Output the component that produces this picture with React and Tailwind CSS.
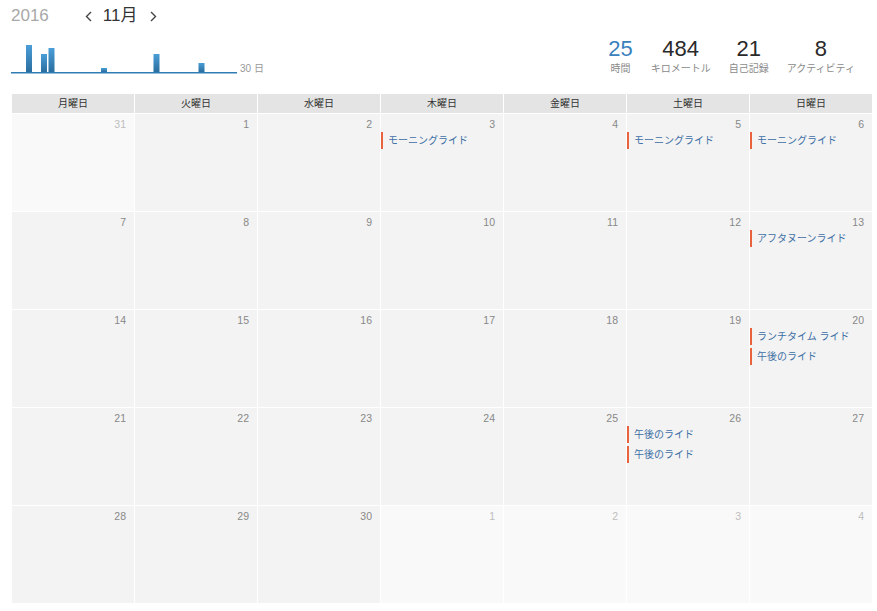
import React from 'react';

const days = ['月曜日', '火曜日', '水曜日', '木曜日', '金曜日', '土曜日', '日曜日'];

const events = {
  3: ['モーニングライド'],
  5: ['モーニングライド'],
  6: ['モーニングライド'],
  13: ['アフタヌーンライド'],
  20: ['ランチタイム ライド', '午後のライド'],
  26: ['午後のライド', '午後のライド'],
};

const cells = [{ d: 31, other: true }];
for (let i = 1; i <= 30; i++) cells.push({ d: i, other: false });
[1, 2, 3, 4].forEach((d) => cells.push({ d, other: true }));

const bars = [
  { day: 3, h: 27 },
  { day: 5, h: 18 },
  { day: 6, h: 24 },
  { day: 13, h: 4 },
  { day: 20, h: 18 },
  { day: 26, h: 9 },
];

const stats = [
  { v: '25', l: '時間', blue: true },
  { v: '484', l: 'キロメートル' },
  { v: '21', l: '自己記録' },
  { v: '8', l: 'アクティビティ' },
];

const font = { fontFamily: '"Liberation Sans", "Noto Sans CJK JP", sans-serif' };

const Chevron = ({ dir }) => (
  <svg width="7" height="11" viewBox="0 0 7 11">
    <path
      d={dir === 'left' ? 'M6 1 L1.5 5.5 L6 10' : 'M1 1 L5.5 5.5 L1 10'}
      fill="none"
      stroke="#444"
      strokeWidth="1.4"
    />
  </svg>
);

export default function App() {
  return (
    <div className="w-[877px] h-[611px] bg-white px-[12px] pt-[5px] overflow-hidden" style={font}>
      <div className="flex justify-between h-[89px]">
        <div className="flex flex-col">
          <div className="flex items-center h-[22px]">
            <span className="text-[17px] text-[#a8a8a8] ml-[-1px]">2016</span>
            <span className="ml-[36px] flex"><Chevron dir="left" /></span>
            <span className="ml-[11px] text-[17px] text-[#333]">11月</span>
            <span className="ml-[13px] flex"><Chevron dir="right" /></span>
          </div>
          <div className="flex items-end mt-[13px] ml-[-1px]">
            <svg width="226" height="34" viewBox="0 0 226 34">
              <defs>
                <linearGradient id="bg" x1="0" y1="0" x2="0" y2="1">
                  <stop offset="0" stopColor="#4a9ed8" />
                  <stop offset="1" stopColor="#2b6e9f" />
                </linearGradient>
              </defs>
              {bars.map((b) => {
                const x = (b.day - 1) * 7.5 + 0;
                return <rect key={b.day} x={x} y={32 - b.h} width="6" height={b.h} fill="url(#bg)" />;
              })}
              <rect x="0" y="32" width="226" height="1.5" fill="#2f7cb3" />
            </svg>
            <span className="text-[10px] text-[#999] ml-[3px] mb-[-2px]">30 日</span>
          </div>
        </div>
        <div className="flex gap-[18px] mr-[10px] mt-[32px] items-start">
          {stats.map((s) => (
            <div key={s.l} className="flex flex-col items-center">
              <span className={`text-[22px] leading-[24px] ${s.blue ? 'text-[#3b81be]' : 'text-[#2a2a2a]'}`}>{s.v}</span>
              <span className="text-[10px] leading-[14px] text-[#8a8a8a] mt-[1px]">{s.l}</span>
            </div>
          ))}
        </div>
      </div>

      <div className="grid grid-cols-7 gap-px w-[860px] bg-white">
        {days.map((d) => (
          <div key={d} className="h-[19px] bg-[#e4e4e4] flex items-center justify-center text-[10px] text-[#333]">
            {d}
          </div>
        ))}
        {cells.map((c, i) => (
          <div key={i} className={`h-[97px] ${c.other ? 'bg-[#f9f9f9]' : 'bg-[#f3f3f3]'}`}>
            <div className={`text-right pr-[8px] pt-[4px] text-[10.5px] leading-[13px] ${c.other ? 'text-[#bdbdbd]' : 'text-[#888]'}`}>
              {c.d}
            </div>
            {!c.other &&
              (events[c.d] || []).map((e, j) => (
                <div key={j} className={`flex items-center h-[17px] ${j === 0 ? 'mt-[1px]' : 'mt-[3px]'} border-l-2 border-[#e8623d] pl-[5px] text-[10px] text-[#3d6fa5]`}>
                  {e}
                </div>
              ))}
          </div>
        ))}
      </div>
    </div>
  );
}
